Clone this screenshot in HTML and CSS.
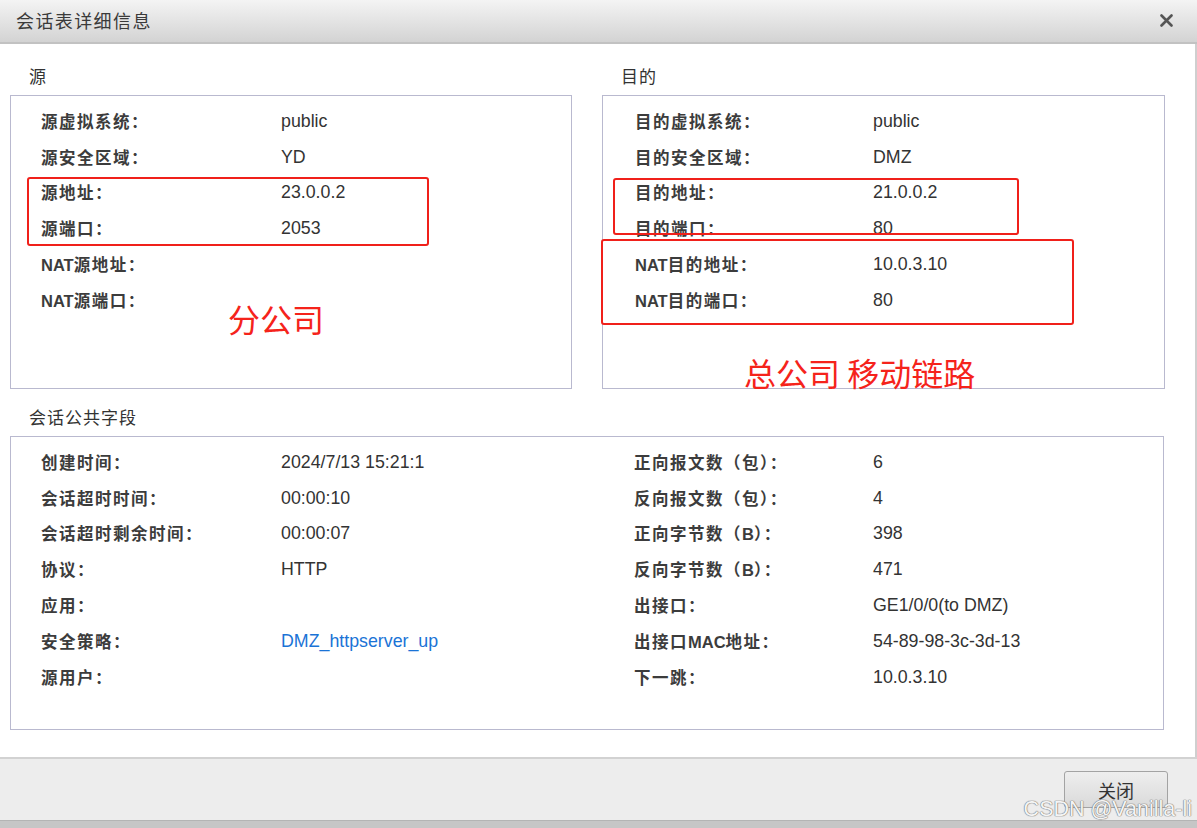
FILE: index.html
```html
<!DOCTYPE html>
<html lang="zh-CN">
<head>
<meta charset="utf-8">
<title>会话表详细信息</title>
<link rel="stylesheet" href="styles.css">
</head>
<body>
<div class="dialog">
  <header class="titlebar">
    <span class="title">会话表详细信息</span>
    <svg class="close-x" width="13" height="13" viewBox="0 0 13 13"><path d="M1.5 1.5 L11.5 11.5 M11.5 1.5 L1.5 11.5" stroke="#555" stroke-width="2.6" stroke-linecap="round"/></svg>
  </header>
  <main class="content">
    <div class="top-grid">
      <section class="group">
        <h2 class="group-title">源</h2>
        <div class="box box-src">
          <div class="row"><span class="label">源虚拟系统：</span><span class="value">public</span></div>
          <div class="row"><span class="label">源安全区域：</span><span class="value">YD</span></div>
          <div class="row"><span class="label">源地址：</span><span class="value">23.0.0.2</span></div>
          <div class="row"><span class="label">源端口：</span><span class="value">2053</span></div>
          <div class="row"><span class="label"><b class="lat">NAT</b>源地址：</span><span class="value"></span></div>
          <div class="row"><span class="label"><b class="lat">NAT</b>源端口：</span><span class="value"></span></div>
          <div class="mark mark-src"></div>
          <div class="note note-src">分公司</div>
        </div>
      </section>
      <section class="group">
        <h2 class="group-title">目的</h2>
        <div class="box box-dst">
          <div class="row"><span class="label">目的虚拟系统：</span><span class="value">public</span></div>
          <div class="row"><span class="label">目的安全区域：</span><span class="value">DMZ</span></div>
          <div class="row"><span class="label">目的地址：</span><span class="value">21.0.0.2</span></div>
          <div class="row"><span class="label">目的端口：</span><span class="value">80</span></div>
          <div class="row"><span class="label"><b class="lat">NAT</b>目的地址：</span><span class="value">10.0.3.10</span></div>
          <div class="row"><span class="label"><b class="lat">NAT</b>目的端口：</span><span class="value">80</span></div>
          <div class="mark mark-dst1"></div>
          <div class="mark mark-dst2"></div>
          <div class="note note-dst">总公司 移动链路</div>
        </div>
      </section>
    </div>
    <section class="group group-common">
      <h2 class="group-title">会话公共字段</h2>
      <div class="box box-common">
        <div class="col col-left">
          <div class="row"><span class="label">创建时间：</span><span class="value">2024/7/13 15:21:1</span></div>
          <div class="row"><span class="label">会话超时时间：</span><span class="value">00:00:10</span></div>
          <div class="row"><span class="label">会话超时剩余时间：</span><span class="value">00:00:07</span></div>
          <div class="row"><span class="label">协议：</span><span class="value">HTTP</span></div>
          <div class="row"><span class="label">应用：</span><span class="value"></span></div>
          <div class="row"><span class="label">安全策略：</span><span class="value link">DMZ_httpserver_up</span></div>
          <div class="row"><span class="label">源用户：</span><span class="value"></span></div>
        </div>
        <div class="col col-right">
          <div class="row"><span class="label">正向报文数（包）：</span><span class="value">6</span></div>
          <div class="row"><span class="label">反向报文数（包）：</span><span class="value">4</span></div>
          <div class="row"><span class="label">正向字节数（<b class="lat">B</b>）：</span><span class="value">398</span></div>
          <div class="row"><span class="label">反向字节数（<b class="lat">B</b>）：</span><span class="value">471</span></div>
          <div class="row"><span class="label">出接口：</span><span class="value">GE1/0/0(to DMZ)</span></div>
          <div class="row"><span class="label">出接口<b class="lat">MAC</b>地址：</span><span class="value">54-89-98-3c-3d-13</span></div>
          <div class="row"><span class="label">下一跳：</span><span class="value">10.0.3.10</span></div>
        </div>
      </div>
    </section>
  </main>
  <footer class="footer">
    <button class="btn" type="button">关闭</button>
    <span class="watermark">CSDN @Vanilla-li</span>
  </footer>
  <div class="bottom-bar"></div>
</div>
</body>
</html>
```
FILE: styles.css
```css
* { box-sizing: border-box; }
html, body { margin: 0; padding: 0; }
body {
  width: 1197px;
  height: 828px;
  overflow: hidden;
  background: #ffffff;
  font-family: "Liberation Sans", "Noto Sans CJK SC", sans-serif;
  color: #333;
}
.dialog {
  width: 1197px;
  height: 828px;
  display: flex;
  flex-direction: column;
  position: relative;
}
.titlebar {
  height: 44px;
  flex: none;
  display: flex;
  align-items: center;
  justify-content: space-between;
  padding: 0 24px 2px 16px;
  background: linear-gradient(#f4f4f4, #d3d3d3);
  border-bottom: 2px solid #c2c2c2;
}
.title {
  font-family: "Noto Sans CJK SC", sans-serif;
  font-size: 18px;
  letter-spacing: 1.4px;
  color: #3a3a3a;
}
.close-x { display: block; margin-top: 1px; }
.content {
  flex: 1;
  padding: 21px 31px 0 10px;
  border-right: 2px solid #cfcfcf;
  background: #fff;
}
.top-grid {
  display: grid;
  grid-template-columns: 562px 563px;
  gap: 30px;
}
.group-title {
  margin: 0 0 8px 19px;
  height: 22px;
  line-height: 22px;
  font-family: "Noto Sans CJK SC", sans-serif;
  font-size: 17px;
  letter-spacing: 1px;
  font-weight: 400;
  color: #333;
}
.box {
  position: relative;
  height: 294px;
  border: 1px solid #b9b9cf;
  padding: 7px 0 0 30px;
}
.box-dst { padding-left: 32px; }
.row {
  display: flex;
  height: 35.8px;
  align-items: center;
}
.label {
  width: 240px;
  flex: none;
  font-family: "Noto Sans CJK SC", sans-serif;
  font-weight: 700;
  color: #3c3c3c;
  font-size: 16.5px;
  letter-spacing: 1.5px;
}
.box-dst .label { width: 238px; }
.lat {
  font-family: "Liberation Sans", sans-serif;
  font-weight: 700;
  letter-spacing: 0;
}
.value {
  font-family: "Liberation Sans", sans-serif;
  color: #333;
  font-size: 17.8px;
  margin-top: 1px;
}
.link { color: #1a73d6; }
.group-common { margin-top: 17px; }
.box-common {
  display: grid;
  grid-template-columns: 593px 1fr;
  padding-top: 7px;
}
.col-right .label { width: 239px; }
.mark {
  position: absolute;
  border: 2px solid #f0201a;
  border-radius: 3px;
}
.mark-src { left: 16px; top: 81px; width: 402px; height: 69px; }
.mark-dst1 { left: 10px; top: 82px; width: 406px; height: 57px; }
.mark-dst2 { left: -2px; top: 143px; width: 473px; height: 86px; }
.note {
  position: absolute;
  font-family: "Noto Sans CJK SC", sans-serif;
  font-size: 32px;
  line-height: 1;
  color: #f5231b;
  white-space: nowrap;
}
.note-src { left: 217px; top: 206px; }
.note-dst { left: 141px; top: 260px; }
.footer {
  position: relative;
  height: 63px;
  flex: none;
  display: flex;
  justify-content: flex-end;
  align-items: flex-start;
  padding: 12px 29px 0 0;
  background: #ededed;
  border-top: 2px solid #d2d2d2;
}
.btn {
  width: 104px;
  height: 37px;
  border: 1px solid #a3a3a3;
  border-radius: 3px;
  background: linear-gradient(#eeeeee, #dadada);
  font-family: "Noto Sans CJK SC", sans-serif;
  font-size: 18px;
  color: #333;
  padding: 0;
}
.watermark {
  position: absolute;
  right: 5px;
  bottom: -2px;
  font-family: "Liberation Sans", sans-serif;
  font-size: 21.5px;
  color: #f4f4f4;
  text-shadow: 0 0 1px #7a7a7a, 0 0 1px #7a7a7a, 0 0 1px #7a7a7a;
  white-space: nowrap;
}
.bottom-bar {
  height: 8px;
  flex: none;
  background: #c6c6c6;
  border-top: 1px solid #b4b4b4;
}
```
